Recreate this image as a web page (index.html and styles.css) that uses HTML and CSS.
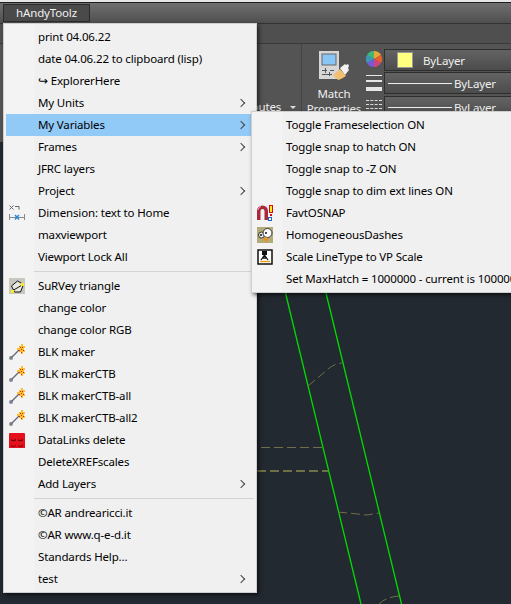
FILE: index.html
```html
<!DOCTYPE html>
<html>
<head>
  <link rel="stylesheet" href="styles.css">
  <title>hAndyToolz</title>
</head>
<body>
  <div class="app">
    <div class="topline"></div>
    <div class="menubar"><span class="menubar-btn">hAndyToolz</span></div>
    <div class="tabs"></div>
    <div class="ribbon">
      <div class="panel-label">butes <span class="caret"></span></div>
      <div class="match">
        <svg width="31" height="32" viewBox="0 0 31 32">
          <rect x="0" y="0" width="20" height="28" fill="#d6d6d6"/>
          <rect x="3" y="3" width="14" height="11" fill="#8ac6f5" stroke="#666"/>
          <path d="M3 19.500h5M11 19.500h4M3 23.500h10M6.500 17v5M10.500 21v4" stroke="#555" fill="none"/>
          <path d="M14 24l7-6 6 7-5 3-3 1z" fill="#f0c070"/>
          <path d="M21 17l5-4 1 1 2-1 1 2-1 2 1 2-4 5z" fill="#f2f2f2"/>
        </svg>
        <div class="match-label">Match</div>
        <div class="match-label">Properties</div>
      </div>
      <div class="glyphs">
        <svg width="16" height="16" viewBox="0 0 16 16">
          <path d="M8 8V0a8 8 0 0 1 7 4z" fill="#e8a838"/>
          <path d="M8 8l7-4a8 8 0 0 1 0 8z" fill="#e8602c"/>
          <path d="M8 8l7 4a8 8 0 0 1-7 4z" fill="#c8487a"/>
          <path d="M8 8v8a8 8 0 0 1-7-4z" fill="#7a58d8"/>
          <path d="M8 8l-7 4a8 8 0 0 1 0-8z" fill="#3c98b8"/>
          <path d="M8 8L1 4a8 8 0 0 1 7-4z" fill="#3cb878"/>
        </svg>
        <div class="weights"><i class="w1"></i><i class="w2"></i><i class="w3"></i></div>
        <div class="dashes"><i></i><i></i><i></i></div>
      </div>
      <div class="combos">
        <div class="combo"><span class="swatch"></span><span class="combo-text">ByLayer</span></div>
        <div class="combo"><span class="line"></span><span>ByLayer</span></div>
        <div class="combo"><span class="line"></span><span>ByLayer</span></div>
      </div>
    </div>
    <svg class="drawing" width="511" height="604" viewBox="0 0 511 604">
      <g fill="none" stroke="#00dc00" stroke-width="1.3">
        <path d="M285.500 293L361 604"/>
        <path d="M326 293L401.500 604"/>
      </g>
      <g fill="none" stroke="#6f6f48" stroke-dasharray="9 4">
        <path d="M308 386L327 370Q333 364 342 363"/>
        <path d="M261 447.500H323"/>
        <path d="M338 512L367 515L379 513"/>
        <path d="M379 604Q386 597 399 596"/>
      </g>
      <path d="M257 471H328" fill="none" stroke="#6f6f48" stroke-width="2" stroke-dasharray="9 4"/>
    </svg>
  </div>

  <ul class="menu main-menu">
    <li class="item"><span class="label">print 04.06.22</span></li>
    <li class="item"><span class="label">date 04.06.22 to clipboard (lisp)</span></li>
    <li class="item"><span class="label">↪ ExplorerHere</span></li>
    <li class="item sub"><span class="label">My Units</span></li>
    <li class="item sub active"><span class="label">My Variables</span></li>
    <li class="item sub"><span class="label">Frames</span></li>
    <li class="item"><span class="label">JFRC layers</span></li>
    <li class="item sub"><span class="label">Project</span></li>
    <li class="item">
      <svg class="icon" width="16" height="16" viewBox="0 0 16 16">
        <path d="M0.500 0.500l4 4M4.500 0.500l-4 4M6 1.500h4v3" stroke="#666" fill="none"/>
        <path d="M0.500 9v6M15.500 9v6M1 12.500h14" stroke="#888" fill="none"/>
        <path d="M6 10l4 4.500M10 10l-4 4.500" stroke="#2a8ae0" stroke-width="1.500" fill="none"/>
      </svg>
      <span class="label">Dimension: text to Home</span>
    </li>
    <li class="item"><span class="label">maxviewport</span></li>
    <li class="item"><span class="label">Viewport Lock All</span></li>
    <li class="sep"></li>
    <li class="item">
      <svg class="icon" width="16" height="16" viewBox="0 0 16 16">
        <rect width="16" height="16" fill="#c8c8c0"/>
        <path d="M2.500 8l6-5 6 3.500-3 7.500h-6z" fill="#e8e8e0" stroke="#111"/>
        <path d="M3 13l11-6.500" stroke="#111"/>
        <rect x="2" y="12" width="3" height="3" fill="#ffe81c"/>
        <rect x="12" y="5" width="3" height="3" fill="#ffe81c"/>
      </svg>
      <span class="label">SuRVey triangle</span>
    </li>
    <li class="item"><span class="label">change color</span></li>
    <li class="item"><span class="label">change color RGB</span></li>
    <li class="item"><svg class="icon" width="16" height="16"><use href="#wand"/></svg><span class="label">BLK maker</span></li>
    <li class="item"><svg class="icon" width="16" height="16"><use href="#wand"/></svg><span class="label">BLK makerCTB</span></li>
    <li class="item"><svg class="icon" width="16" height="16"><use href="#wand"/></svg><span class="label">BLK makerCTB-all</span></li>
    <li class="item"><svg class="icon" width="16" height="16"><use href="#wand"/></svg><span class="label">BLK makerCTB-all2</span></li>
    <li class="item">
      <svg class="icon" width="16" height="16" viewBox="0 0 16 16">
        <rect width="16" height="16" y="1" rx="1" fill="#e4101c"/>
        <path d="M2 7q2 2 5 0v1.500q-3 1.500-5 0zM9 7q2 2 5 0v1.500q-3 1.500-5 0zM2 13q2 2 5 0v1q-3 1.500-5 0zM9 13q2 2 5 0v1q-3 1.500-5 0z" fill="#6a0008"/>
      </svg>
      <span class="label">DataLinks delete</span>
    </li>
    <li class="item"><span class="label">DeleteXREFscales</span></li>
    <li class="item sub"><span class="label">Add Layers</span></li>
    <li class="sep"></li>
    <li class="item"><span class="label">©AR andrearicci.it</span></li>
    <li class="item"><span class="label">©AR www.q-e-d.it</span></li>
    <li class="item"><span class="label">Standards Help...</span></li>
    <li class="item sub"><span class="label">test</span></li>
  </ul>

  <ul class="menu sub-menu">
    <li class="item"><span class="label">Toggle Frameselection ON</span></li>
    <li class="item"><span class="label">Toggle snap to hatch ON</span></li>
    <li class="item"><span class="label">Toggle snap to -Z ON</span></li>
    <li class="item"><span class="label">Toggle snap to dim ext lines ON</span></li>
    <li class="item">
      <svg class="icon" width="16" height="16" viewBox="0 0 16 16">
        <path d="M0 15V6a5.500 5.500 0 0 1 11 0v9H7.500V6a2 2 0 0 0-4 0v9z" fill="#a8283c"/>
        <path d="M1 5a4 4 0 0 1 3-3.500" stroke="#e8a0a8" fill="none"/>
        <rect x="12.500" y="0.500" width="3" height="7" fill="#ffe81c" stroke="#d01010"/>
        <rect x="13" y="9" width="2" height="2" fill="#d01010"/>
        <rect x="11.500" y="12.500" width="3" height="3" fill="#fff" stroke="#1a6ac0"/>
      </svg>
      <span class="label">FavtOSNAP</span>
    </li>
    <li class="item">
      <svg class="icon" width="16" height="16" viewBox="0 0 16 16">
        <rect width="16" height="16" fill="#b4ac78"/>
        <circle cx="4.500" cy="8" r="3" fill="#eee" stroke="#333"/>
        <circle cx="10.500" cy="6" r="4.500" fill="#fff" stroke="#333"/>
        <circle cx="4" cy="8" r="1" fill="#111"/>
        <circle cx="9" cy="6" r="1" fill="#111"/>
        <path d="M6 11l4-1 1 2-2 4z" fill="#e89020"/>
      </svg>
      <span class="label">HomogeneousDashes</span>
    </li>
    <li class="item">
      <svg class="icon" width="16" height="16" viewBox="0 0 16 16">
        <rect x="1" y="1" width="14" height="14" fill="#fff" stroke="#111" stroke-width="1.500"/>
        <rect x="5" y="2" width="5" height="4" fill="#111"/>
        <path d="M7.500 6L4 11M7.500 6L11 11M5 9h5" stroke="#111" stroke-width="1.300" fill="none"/>
        <path d="M3 12.500h10" stroke="#e8a020" stroke-width="1.500"/>
      </svg>
      <span class="label">Scale LineType to VP Scale</span>
    </li>
    <li class="item"><span class="label">Set MaxHatch = 1000000 - current is 1000000</span></li>
  </ul>

  <svg class="defs" width="0" height="0">
    <symbol id="wand" viewBox="0 0 16 16">
      <path d="M2 14L10 6" stroke="#667" stroke-width="1.200"/>
      <rect x="1" y="13" width="2" height="2" fill="#fff" stroke="#456"/>
      <path d="M10 2h2V0h2v2h2v2h-1v2h1v2h-2v2h-2V8h-2V6H8V4h2z" fill="#f6c030"/>
      <path d="M11 3h1v1h-1zM13 3h1v1h-1zM12 5h1v1h-1zM14 6h1v1h-1zM10 6h1v1h-1zM12 8h1v1h-1z" fill="#e02010"/>
    </symbol>
  </svg>
</body>
</html>
```

FILE: styles.css
```css
* {
  box-sizing: border-box;
}

html, body {
  margin: 0;
  height: 604px;
  overflow: hidden;
  background: #222930;
  font-family: "Noto Sans", "Open Sans", sans-serif;
  font-size: 11.5px;
  letter-spacing: -0.15px;
  color: #000;
}

.app {
  position: relative;
  width: 511px;
  height: 604px;
  overflow: hidden;
}

/* barra superior */
.topline {
  height: 2px;
  background: #e6e6e6;
}

.menubar {
  height: 21px;
  padding: 1px 0 0 3px;
  background: linear-gradient(#6f6f6f, #4f4f4f);
  border-top: 1px solid #1d1d1d;
}

.menubar-btn {
  display: block;
  width: 87px;
  height: 18px;
  line-height: 16px;
  text-align: center;
  color: #f0f0f0;
  background: #4a4a4a;
  border: 1px solid #2c2c2c;
}

.tabs {
  height: 21px;
  background: #4f4f4f;
  border-top: 1px solid #333;
  border-bottom: 1px solid #3a3a3a;
}

/* cinta de opciones */
.ribbon {
  height: 98px;
  display: flex;
  justify-content: flex-end;
  background: #545454;
  color: #f0f0f0;
  overflow: hidden;
}

.panel-label {
  width: 52px;
  padding: 55px 5px 0 0;
  border-right: 1px solid #444;
  text-align: right;
  white-space: nowrap;
}

.caret {
  display: inline-block;
  border: 3px solid transparent;
  border-top-color: #ddd;
  border-bottom-width: 0;
  margin: 0 0 2px 6px;
}

.match {
  width: 64px;
  padding: 7px 0 0 17px;
}

.match svg {
  display: block;
  margin-bottom: 3px;
}

.match-label {
  margin-left: -17px;
  text-align: center;
  line-height: 15px;
}

.glyphs {
  width: 18px;
  padding-top: 7px;
}

.glyphs svg {
  display: block;
}

.weights {
  margin-top: 8px;
  width: 16px;
}

.weights i {
  display: block;
  background: #e6e6e6;
}

.w1 { height: 1px; margin-bottom: 4px; }
.w2 { height: 2px; margin-bottom: 5px; }
.w3 { height: 4px; }

.dashes {
  margin-top: 9px;
  width: 16px;
}

.dashes i {
  display: block;
  height: 1px;
  margin-bottom: 3px;
  border-top: 1px dashed #ddd;
}

.combos {
  width: 127px;
  padding-top: 5px;
}

.combo {
  display: flex;
  align-items: center;
  height: 22px;
  margin-bottom: 1px;
  padding-left: 3px;
  gap: 2px;
  background: linear-gradient(#636363, #4c4c4c);
  border: 1px solid #2e2e2e;
  border-right: 0;
}

.combo:last-child {
  margin-top: 2px;
}

.swatch {
  width: 16px;
  height: 16px;
  margin-left: 9px;
  background: #ffff80;
  border: 1px solid #999;
}

.combo-text {
  margin-left: 8px;
}

.line {
  width: 64px;
  border-top: 1px solid #eee;
}

/* dibujo */
.drawing {
  position: absolute;
  left: 0;
  top: 0;
}

.defs {
  position: absolute;
}

/* menus */
.menu {
  position: absolute;
  margin: 0;
  padding: 2px;
  list-style: none;
  background: linear-gradient(90deg, #f3f3f3 30px, #f0f0f0 30px);
  border: 1px solid #cfcfcf;
  box-shadow: 2px 2px 4px rgba(0, 0, 0, 0.6);
  overflow: hidden;
}

.main-menu {
  left: 3px;
  top: 23px;
  width: 254px;
  height: 570px;
}

.sub-menu {
  left: 251px;
  top: 111px;
  width: 270px;
  height: 182px;
}

.item {
  position: relative;
  height: 22px;
  line-height: 22px;
  padding-left: 32px;
  white-space: nowrap;
}

.item.active {
  background: #91c9f7;
}

.item.sub::after {
  content: "";
  position: absolute;
  right: 10px;
  top: 8px;
  width: 5px;
  height: 5px;
  border-top: 1px solid #444;
  border-right: 1px solid #444;
  transform: rotate(45deg);
}

.icon {
  position: absolute;
  left: 3px;
  top: 3px;
}

.sep {
  height: 1px;
  margin: 3px 0 3px 28px;
  background: #d4d4d4;
}
```
